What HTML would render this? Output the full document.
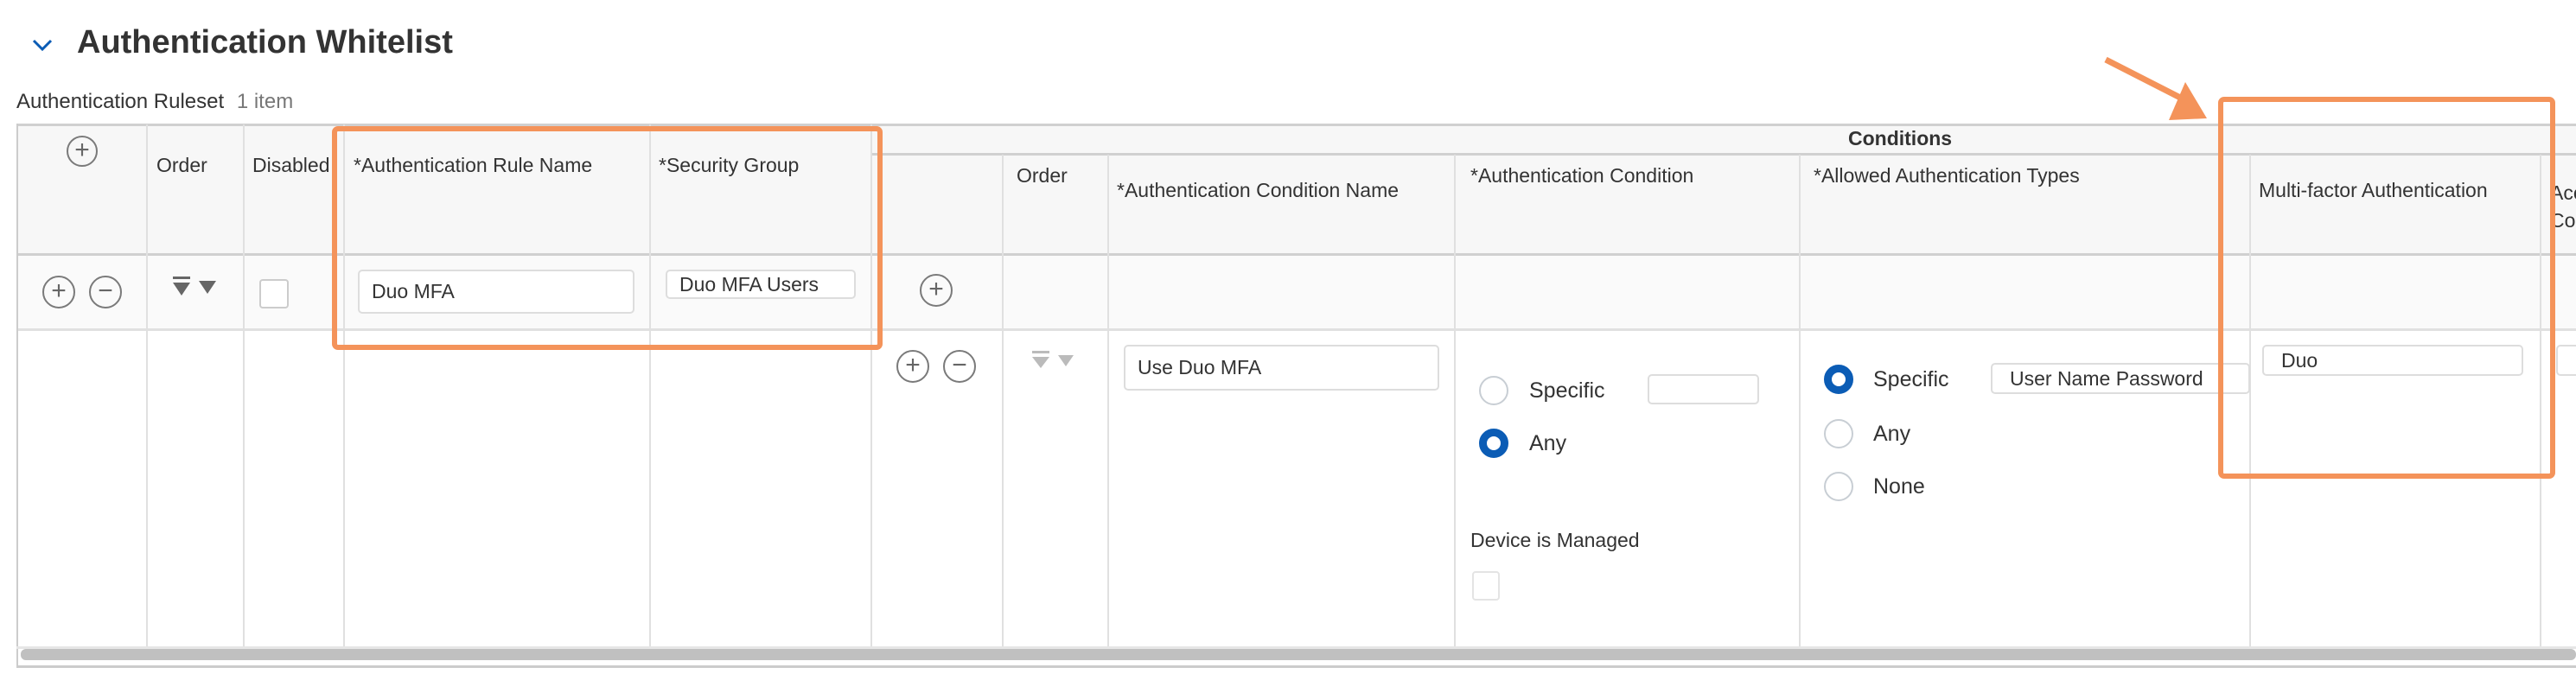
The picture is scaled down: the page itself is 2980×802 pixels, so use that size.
<!DOCTYPE html>
<html><head><meta charset="utf-8"><style>
*{margin:0;padding:0;box-sizing:border-box}
body{width:2980px;height:802px;background:#fff;position:relative;overflow:hidden;font-family:"Liberation Sans",sans-serif;color:#333}
.a{position:absolute}
.t{position:absolute;font-size:23px;white-space:nowrap}
.h{position:absolute;font-size:23px;white-space:nowrap;color:#333;font-weight:500}
.vl{position:absolute;width:2px;background:#e0e0e0}
.hl{position:absolute;height:3px;background:#d0d0d0}
.inp{position:absolute;border:2px solid #ddd;border-radius:5px;background:#fff;font-size:23px;padding-left:14px;display:flex;align-items:center;color:#333;white-space:nowrap;overflow:hidden}
.circ{position:absolute;border:2px solid #7a7a7a;border-radius:50%;color:#666;text-align:center}
.rad{position:absolute;width:34px;height:34px;border-radius:50%;border:2px solid #c8ced4;background:#fff}
.rad.on{border:9px solid #0b5cb5}
.orange{position:absolute;border:6px solid #f4935a;border-radius:7px}
</style></head><body>
<svg class="a" style="left:36px;top:44px" width="26" height="16"><path d="M3 3 L13 13 L23 3" stroke="#0b5cb5" stroke-width="3" fill="none"/></svg>
<div class="a" style="left:89px;top:28px;font-size:38px;font-weight:bold;color:#333">Authentication Whitelist</div>
<div class="a" style="left:19px;top:104px;font-size:24px;color:#333">Authentication Ruleset <span style="color:#777;margin-left:8px">1 item</span></div>

<!-- table backgrounds -->
<div class="a" style="left:19px;top:144px;width:2961px;height:151px;background:#f7f7f7"></div>
<div class="a" style="left:19px;top:295px;width:2961px;height:87px;background:#fafafa"></div>
<div class="hl" style="left:19px;top:143px;width:2961px"></div>
<div class="hl" style="left:1007px;top:177px;width:1973px"></div>
<div class="hl" style="left:19px;top:293px;width:2961px"></div>
<div class="hl" style="left:19px;top:380px;width:2961px;background:#e0e0e0"></div>
<div class="a" style="left:19px;top:143px;width:2px;height:630px;background:#ccc"></div>
<!-- column lines -->
<div class="vl" style="left:169px;top:144px;height:607px"></div>
<div class="vl" style="left:281px;top:144px;height:607px"></div>
<div class="vl" style="left:397px;top:144px;height:607px"></div>
<div class="vl" style="left:751px;top:144px;height:607px"></div>
<div class="vl" style="left:1007px;top:144px;height:607px"></div>
<div class="vl" style="left:1159px;top:179px;height:572px"></div>
<div class="vl" style="left:1281px;top:179px;height:572px"></div>
<div class="vl" style="left:1682px;top:179px;height:572px"></div>
<div class="vl" style="left:2081px;top:179px;height:572px"></div>
<div class="vl" style="left:2602px;top:179px;height:572px"></div>
<div class="vl" style="left:2938px;top:179px;height:572px"></div>
<!-- scrollbar -->
<div class="a" style="left:19px;top:748px;width:2961px;height:3px;background:#e6e6e6"></div>
<div class="a" style="left:24px;top:751px;width:2956px;height:13px;background:#c0c0c0;border-radius:6px"></div>
<div class="a" style="left:19px;top:770px;width:2961px;height:3px;background:#ccc"></div>

<!-- headers -->
<div class="circ" style="left:77px;top:157px;width:36px;height:36px;font-size:30px;line-height:30px">+</div>
<div class="h" style="left:181px;top:178px">Order</div>
<div class="h" style="left:292px;top:178px;width:104px;overflow:hidden">Disabled</div>
<div class="h" style="left:409px;top:178px">*Authentication Rule Name</div>
<div class="h" style="left:762px;top:178px">*Security Group</div>
<div class="h" style="left:2138px;top:147px;font-weight:bold">Conditions</div>
<div class="h" style="left:1176px;top:190px">Order</div>
<div class="h" style="left:1292px;top:207px">*Authentication Condition Name</div>
<div class="h" style="left:1701px;top:190px">*Authentication Condition</div>
<div class="h" style="left:2098px;top:190px">*Allowed Authentication Types</div>
<div class="h" style="left:2613px;top:207px">Multi-factor Authentication</div>
<div class="h" style="left:2950px;top:207px;line-height:32px">Acc<br>Con</div>

<!-- row 1 -->
<div class="circ" style="left:49px;top:319px;width:38px;height:38px;font-size:30px;line-height:32px">+</div>
<div class="circ" style="left:103px;top:319px;width:38px;height:38px;font-size:30px;line-height:32px">−</div>
<svg class="a" style="left:198px;top:318px" width="56" height="26"><rect x="2" y="2" width="20" height="3" fill="#666"/><path d="M2 9 L22 9 L12 24Z M32 7 L52 7 L42 22Z" fill="#666"/></svg>
<div class="a" style="left:300px;top:323px;width:34px;height:34px;border:2px solid #ccc;border-radius:4px;background:#fff"></div>
<div class="inp" style="left:414px;top:312px;width:320px;height:51px">Duo MFA</div>
<div class="inp" style="left:770px;top:312px;width:220px;height:34px">Duo MFA Users</div>
<div class="circ" style="left:1064px;top:317px;width:38px;height:38px;font-size:30px;line-height:32px">+</div>

<!-- row 2 -->
<div class="circ" style="left:1037px;top:405px;width:38px;height:38px;font-size:30px;line-height:32px">+</div>
<div class="circ" style="left:1091px;top:405px;width:38px;height:38px;font-size:30px;line-height:32px">−</div>
<svg class="a" style="left:1192px;top:404px" width="56" height="26"><rect x="2" y="2" width="20" height="3" fill="#bbb"/><path d="M2 9 L22 9 L12 22Z M32 7 L50 7 L41 20Z" fill="#bbb"/></svg>
<div class="inp" style="left:1300px;top:399px;width:365px;height:53px">Use Duo MFA</div>
<div class="rad" style="left:1711px;top:435px"></div>
<div class="t" style="left:1769px;top:438px;font-size:25px">Specific</div>
<div class="inp" style="left:1906px;top:433px;width:129px;height:35px"></div>
<div class="rad on" style="left:1711px;top:496px"></div>
<div class="t" style="left:1769px;top:499px;font-size:25px">Any</div>
<div class="h" style="left:1701px;top:612px">Device is Managed</div>
<div class="a" style="left:1703px;top:661px;width:32px;height:34px;border:2px solid #e4e4e4;border-radius:4px"></div>

<div class="rad on" style="left:2110px;top:422px"></div>
<div class="t" style="left:2167px;top:425px;font-size:25px">Specific</div>
<div class="inp" style="left:2303px;top:420px;width:300px;height:36px;padding-left:20px">User Name Password</div>
<div class="rad" style="left:2110px;top:485px"></div>
<div class="t" style="left:2167px;top:488px;font-size:25px">Any</div>
<div class="rad" style="left:2110px;top:546px"></div>
<div class="t" style="left:2167px;top:549px;font-size:25px">None</div>

<div class="inp" style="left:2617px;top:399px;width:302px;height:36px;padding-left:20px">Duo</div>
<div class="inp" style="left:2957px;top:399px;width:60px;height:36px"></div>

<!-- annotations -->
<div class="orange" style="left:384px;top:146px;width:637px;height:259px"></div>
<div class="orange" style="left:2566px;top:112px;width:390px;height:442px"></div>
<svg class="a" style="left:2420px;top:55px" width="150" height="100"><line x1="16" y1="14" x2="110" y2="62" stroke="#f4935a" stroke-width="7"/><path d="M89 84 L133 82 L108 40Z" fill="#f4935a"/></svg>
</body></html>
